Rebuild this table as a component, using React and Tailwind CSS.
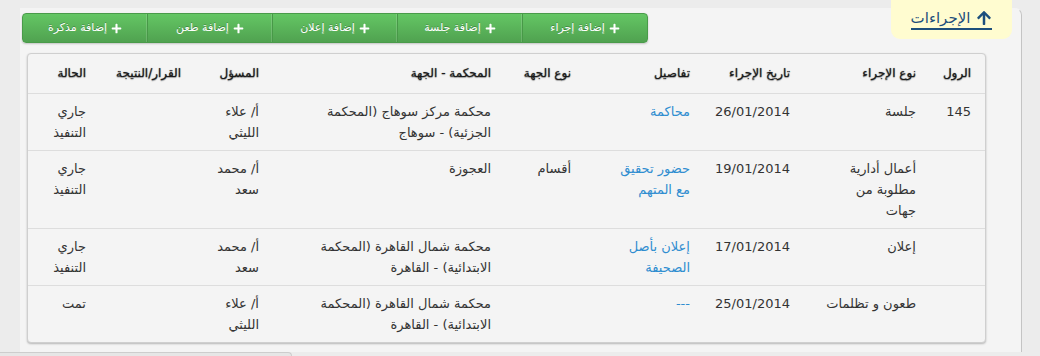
import React from "react";
import { FaPlus, FaArrowUp } from "react-icons/fa";

const font = { fontFamily: '"DejaVu Sans", "Liberation Sans", sans-serif' };

const buttons = ["إضافة إجراء", "إضافة جلسة", "إضافة إعلان", "إضافة طعن", "إضافة مذكرة"];

const headers = [
  "الرول",
  "نوع الإجراء",
  "تاريخ الإجراء",
  "تفاصيل",
  "نوع الجهة",
  "المحكمة - الجهة",
  "المسؤل",
  "القرار/النتيجة",
  "الحالة",
];

const rows = [
  {
    c: [
      ["145"],
      ["جلسة"],
      ["26/01/2014"],
      ["محاكمة"],
      [],
      ["محكمة مركز سوهاج (المحكمة", "الجزئية) - سوهاج"],
      ["أ/ علاء", "الليثي"],
      [],
      ["جاري", "التنفيذ"],
    ],
  },
  {
    c: [
      [],
      ["أعمال أدارية", "مطلوبة من", "جهات"],
      ["19/01/2014"],
      ["حضور تحقيق", "مع المتهم"],
      ["أقسام"],
      ["العجوزة"],
      ["أ/ محمد", "سعد"],
      [],
      ["جاري", "التنفيذ"],
    ],
  },
  {
    c: [
      [],
      ["إعلان"],
      ["17/01/2014"],
      ["إعلان بأصل", "الصحيفة"],
      [],
      ["محكمة شمال القاهرة (المحكمة", "الابتدائية) - القاهرة"],
      ["أ/ محمد", "سعد"],
      [],
      ["جاري", "التنفيذ"],
    ],
  },
  {
    c: [
      [],
      ["طعون و تظلمات"],
      ["25/01/2014"],
      ["---"],
      [],
      ["محكمة شمال القاهرة (المحكمة", "الابتدائية) - القاهرة"],
      ["أ/ علاء", "الليثي"],
      [],
      ["تمت"],
    ],
  },
];

function Lines({ lines }) {
  return lines.map((l, i) => (
    <span key={i} className="block whitespace-nowrap">
      {l}
    </span>
  ));
}

export default function App() {
  return (
    <div
      dir="rtl"
      style={font}
      className="relative w-[1040px] h-[356px] overflow-hidden bg-[#ececec] pt-[8px] text-[13px] text-[#333333]"
    >
      <div className="mr-[18px] ml-[20px] h-[344px] rounded-tr-[7px] border-r border-t border-r-[#c4c4c4] border-t-[#f4f4f4] bg-[#f4f4f4]">
        <div dir="ltr" className="flex pt-[4px] pl-[2px]">
          <div
            dir="rtl"
            className="flex h-[30px] w-[626px] overflow-hidden rounded-[4px] border border-[#4a9b4a] bg-gradient-to-b from-[#64c664] to-[#50a250] shadow-[0_1px_2px_rgba(0,0,0,0.2)]"
          >
            {buttons.map((b, i) => (
              <div
                key={i}
                className={
                  "flex flex-1 items-center justify-center gap-[4px] text-[11px] text-white [text-shadow:0_-1px_0_rgba(0,0,0,0.25)] " +
                  (i > 0 ? "border-r border-r-[#489848] shadow-[inset_-1px_0_0_rgba(255,255,255,0.15)]" : "")
                }
              >
                <FaPlus className="h-[11px] w-[11px]" />
                <span className="whitespace-nowrap">{b}</span>
              </div>
            ))}
          </div>
        </div>

        <div className="mr-[35px] ml-[7px] mt-[10px] overflow-hidden rounded-[4px] border border-[#cfcfcf] bg-[#f4f4f4] shadow-[0_1px_2px_rgba(0,0,0,0.25)]">
          <table className="w-full table-fixed border-collapse">
            <colgroup>
              <col className="w-[61px]" />
              <col className="w-[126px]" />
              <col className="w-[100px]" />
              <col className="w-[119px]" />
              <col className="w-[80px]" />
              <col className="w-[232px]" />
              <col className="w-[78px]" />
              <col className="w-[95px]" />
              <col />
            </colgroup>
            <thead>
              <tr className="border-b border-[#dddddd]">
                {headers.map((h, i) => (
                  <th
                    key={i}
                    className={
                      "whitespace-nowrap pt-[9px] pb-[9px] pl-2 text-right align-top text-[12px] font-normal leading-[21px] text-[#1a1a1a] [text-shadow:0_0_1px_rgba(0,0,0,0.6),0_1px_1px_rgba(0,0,0,0.3)] " +
                      (i === 0 ? "pr-[14px]" : "pr-2")
                    }
                  >
                    {h}
                  </th>
                ))}
              </tr>
            </thead>
            <tbody>
              {rows.map((r, ri) => (
                <tr key={ri} className={ri > 0 ? "border-t border-[#dddddd]" : ""}>
                  {r.c.map((cell, ci) => (
                    <td
                      key={ci}
                      className={
                        "pt-[7px] pb-[7px] pl-2 text-right align-top leading-[21px] " +
                        (ci === 0 ? "pr-[14px] " : "pr-2 ") +
                        (ci === 3 ? "text-[#2f8dd0]" : "text-[#333333]")
                      }
                    >
                      <Lines lines={cell} />
                    </td>
                  ))}
                </tr>
              ))}
            </tbody>
          </table>
        </div>
      </div>

      <div className="mr-auto h-[4px] w-[292px] rounded-tr-[5px] border-t border-r border-[#cdcdcd] bg-[#e6e6e6]" />

      <div className="absolute top-0 left-[891px] flex h-[39px] w-[121px] items-center justify-center rounded-b-[9px] bg-[#fffcd0]">
        <a className="flex items-center gap-[6px] border-b-2 border-[#1d4f7c] pb-[1px] text-[15px] leading-[18px] text-[#1d4f7c]">
          <FaArrowUp className="h-[16px] w-[16px]" />
          <span>الإجراءات</span>
        </a>
      </div>
    </div>
  );
}
